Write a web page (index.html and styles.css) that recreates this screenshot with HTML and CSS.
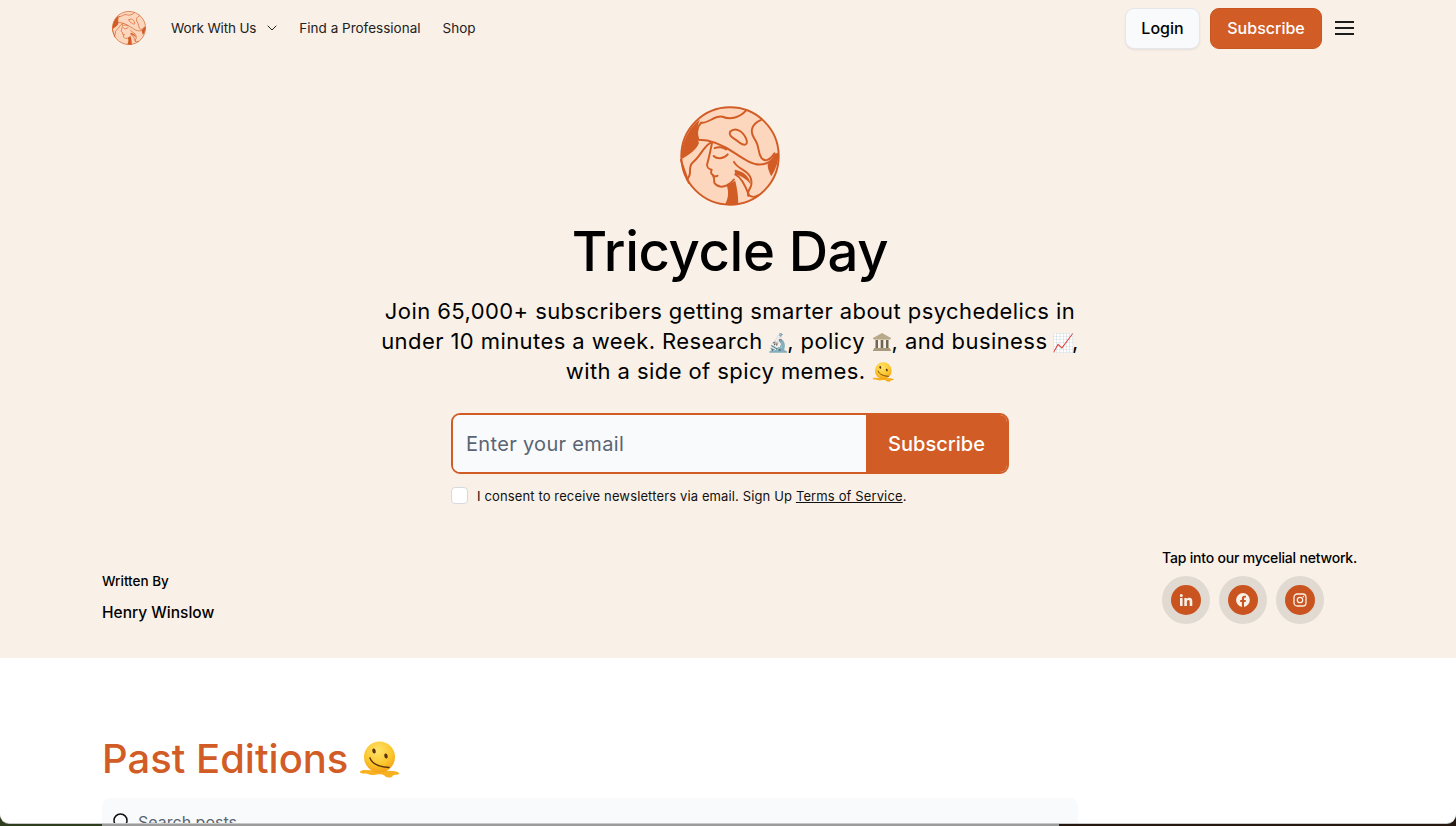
FILE: index.html
```html
<!DOCTYPE html>
<html lang="en">
<head>
<meta charset="utf-8">
<title>Tricycle Day</title>
<link rel="stylesheet" href="styles.css">
</head>
<body>
<svg class="defs" width="0" height="0" aria-hidden="true">
  <defs>
    <radialGradient id="melt" cx=".45" cy=".3" r=".75">
      <stop offset="0" stop-color="#ffe36b"/>
      <stop offset=".6" stop-color="#fcc62d"/>
      <stop offset="1" stop-color="#f39a12"/>
    </radialGradient>
  </defs>
  <symbol id="logo" viewBox="57 27 306 306">
    <circle cx="210" cy="180" r="149" fill="#fdd7bd" stroke="#d25c25" stroke-width="6"/>
    <path d="M118 68 C85 92 62 135 60 190 C75 182 108 162 115 140 C108 118 106 98 118 68Z" fill="#d25c25"/>
    <path d="M350 172 C340 190 326 198 325 208 C326 222 332 232 336 242 C350 222 358 198 359 170Z" fill="#d25c25"/>
    <path d="M200 270 L226 256 C232 280 236 305 235 328 C222 331 206 330 195 327 C205 310 207 290 200 270Z" fill="#d25c25"/>
    <path d="M224 222 C245 226 268 236 274 268 C262 250 240 240 226 236Z" fill="#d25c25"/>
    <g fill="none" stroke="#d25c25" stroke-width="6" stroke-linecap="round" stroke-linejoin="round">
      <path d="M122 78 C142 82 165 54 187 60 C212 70 240 62 258 42"/>
      <path d="M122 78 C108 92 106 115 114 130 C150 130 192 148 226 172 C256 192 280 207 302 206 C322 206 342 194 350 176"/>
      <path d="M304 70 C280 80 268 102 284 126 C302 150 294 170 306 186 C316 198 332 194 346 172"/>
      <path d="M210 106 C224 92 246 100 258 124 C268 146 256 150 240 140 C226 126 204 122 210 106Z"/>
      <path d="M155 140 C150 165 146 185 140 205 C138 214 146 220 154 222 C150 230 152 236 158 238 C154 242 172 244 172 240 M158 238 C162 246 162 256 162 262 C170 276 188 276 200 270 C208 266 216 260 222 252"/>
      <path d="M160 180 C170 190 190 190 203 175"/>
      <path d="M163 156 C175 150 190 154 198 160"/>
      <path d="M150 140 C128 152 122 178 96 200 C78 216 98 234 78 252"/>
      <path d="M60 192 C66 212 76 240 84 262"/>
      <path d="M222 198 C236 224 268 222 274 250 C284 282 258 280 266 302"/>
      <path d="M226 236 C244 244 256 268 268 300 C276 306 288 306 296 300"/>
    </g>
  </symbol>
  <symbol id="melting" viewBox="0 0 40 37">
    <path d="M5 29C3 29 1 30 1 31c0 1.500 3 1.500 5 1.500 3 0 4 1.500 8 1.500s6-1 9-.5c3 .4 3 3 7 3s3-2 5-2.500 5 0 5-1.500c0-1.500-3-2-5-2.500z" fill="#f7b01f"/>
    <circle cx="20.500" cy="16" r="15.500" fill="url(#melt)"/>
    <ellipse cx="15" cy="10" rx="1.700" ry="2.600" fill="#5a3410" transform="rotate(-15 15 10)"/>
    <ellipse cx="27" cy="15" rx="1.700" ry="2.600" fill="#5a3410" transform="rotate(-15 27 15)"/>
    <path d="M11 17C13 23 21 26 30 26.500" fill="none" stroke="#5a3410" stroke-width="1.500" stroke-linecap="round"/>
  </symbol>
  <symbol id="bank" viewBox="0 0 20 20">
    <path d="M10 1 19 6v1H1V6z" fill="#b8a98a"/>
    <path d="M2 16h16v1.500H2zM1 17.500h18V19H1z" fill="#a89a7c"/>
    <path d="M3.500 8h2.500v8H3.500zM8.700 8h2.600v8H8.700zM14 8h2.500v8H14z" fill="#6f6753"/>
    <path d="M2 7h16v1H2z" fill="#cfc3a8"/>
  </symbol>
</svg>
<div class="desk">
  <div class="desk-a"></div>
  <div class="desk-b"></div>
  <div class="desk-c"></div>
</div>
<div class="page">
  <header class="hero">
    <nav class="nav">
      <div class="nav-left">
        <svg class="nav-logo"><use href="#logo"/></svg>
        <div class="nav-links">
          <a class="nav-link nav-link-menu">Work With Us
            <svg class="chev" viewBox="0 0 10 6"><path d="M.7.7 5 5 9.300.7" fill="none" stroke="#222" stroke-width="1"/></svg>
          </a>
          <a class="nav-link">Find a Professional</a>
          <a class="nav-link">Shop</a>
        </div>
      </div>
      <div class="nav-right">
        <a class="btn btn-light">Login</a>
        <a class="btn btn-orange">Subscribe</a>
        <svg class="burger" viewBox="0 0 19 16" preserveAspectRatio="none"><path d="M0 2h19M0 8h19M0 14h19" stroke="#1c1c1c" stroke-width="1.800"/></svg>
      </div>
    </nav>
    <div class="intro">
      <svg class="hero-logo"><use href="#logo"/></svg>
      <h1 class="title">Tricycle Day</h1>
      <p class="lead">Join 65,000+ subscribers getting smarter about psychedelics in<br>under 10 minutes a week. Research <span class="lead-emoji">🔬</span>, policy <svg class="lead-bank"><use href="#bank"/></svg>, and business <span class="lead-emoji">📈</span>,<br>with a side of spicy memes. <svg class="lead-melt"><use href="#melting"/></svg></p>
      <form class="signup">
        <div class="signup-field">Enter your email</div>
        <div class="signup-btn">Subscribe</div>
      </form>
      <label class="consent">
        <span class="check"></span>
        <span>I consent to receive newsletters via email. Sign Up <u>Terms of Service</u>.</span>
      </label>
    </div>
    <div class="meta">
      <div class="author">
        <div class="written">Written By</div>
        <div class="name">Henry Winslow</div>
      </div>
      <div class="social">
        <div class="tap">Tap into our mycelial network.</div>
        <div class="social-row">
          <span class="ring"><span class="dot"><svg viewBox="0 0 16 16"><path d="M2 6h2.600v8H2zM3.300 2a1.500 1.500 0 1 1 0 3 1.500 1.500 0 0 1 0-3zM6.300 6h2.500v1.100C9.300 6.300 10.300 5.800 11.400 5.800c2.200 0 2.900 1.400 2.900 3.500V14h-2.600V9.800c0-1-.3-1.800-1.300-1.800-1.100 0-1.500.8-1.500 1.800V14H6.300z" fill="#f9f0e7"/></svg></span></span>
          <span class="ring"><span class="dot"><svg viewBox="0 0 16 16"><path d="M8 1a7 7 0 0 0-1.100 13.900V10H5.200V8h1.700V6.400c0-1.800 1-2.700 2.600-2.700.8 0 1.500.1 1.500.1v1.700h-.9c-.8 0-1.100.5-1.100 1.100V8h1.900l-.3 2H9v4.900A7 7 0 0 0 8 1z" fill="#f9f0e7"/></svg></span></span>
          <span class="ring"><span class="dot"><svg viewBox="0 0 16 16"><rect x="2" y="2" width="12" height="12" rx="3.300" fill="none" stroke="#f9f0e7" stroke-width="1.300"/><circle cx="8" cy="8" r="2.700" fill="none" stroke="#f9f0e7" stroke-width="1.300"/><circle cx="11.400" cy="4.600" r=".8" fill="#f9f0e7"/></svg></span></span>
        </div>
      </div>
    </div>
  </header>
  <main class="editions">
    <h2 class="editions-title">Past Editions <svg class="title-melt"><use href="#melting"/></svg></h2>
    <div class="search">
      <svg class="search-icon" viewBox="0 0 20 20"><circle cx="8.500" cy="8.500" r="6.500" fill="none" stroke="#111" stroke-width="1.500"/><path d="M13.500 13.500 18 18" stroke="#111" stroke-width="1.500"/></svg>
      <span>Search posts</span>
    </div>
  </main>
</div>
</body>
</html>
```

FILE: styles.css
```css
* { box-sizing: border-box; }
html, body { margin: 0; height: 826px; overflow: hidden; background: #241811; }
body { font-family: "Inter", "Noto Sans", sans-serif; color: #000; position: relative; }
.defs { position: absolute; }
.page { position: relative; height: 823px; overflow: hidden; background: #fff; border-radius: 0 0 9px 9px; box-shadow: 0 1px 0 #c8c8c8; }
.hero { background: #f9f0e7; height: 658px; padding: 0 98px 0 102px; display: flex; flex-direction: column; }
.nav { height: 56px; display: flex; justify-content: space-between; align-items: center; }
.nav-left { display: flex; align-items: center; }
.nav-logo { width: 34px; height: 34px; margin-left: 10px; }
.nav-links { display: flex; gap: 22px; margin-left: 25px; font-size: 13.500px; color: #222; align-items: center; }
.nav-link { display: flex; align-items: center; gap: 11px; }
.nav-link-menu { letter-spacing: -.15px; }
.chev { width: 10px; height: 6px; }
.nav-right { display: flex; align-items: center; gap: 10px; }
.btn { display: flex; align-items: center; justify-content: center; height: 41px; border-radius: 9px; font-size: 16px; font-weight: 500; }
.btn-light { width: 75px; background: #f9fafb; border: 1px solid #e4e7ec; box-shadow: 0 1px 2px rgba(0,0,0,.08); }
.btn-orange { width: 112px; background: #d25c25; color: #fff; border: 1px solid #c95520; }
.burger { width: 19px; height: 16px; margin-left: 3px; margin-right: 4px; }
.intro { display: flex; flex-direction: column; align-items: center; margin-top: 50px; }
.hero-logo { width: 100px; height: 100px; }
.title { margin: 9px 0 0; font-size: 54.500px; line-height: 72px; font-weight: 500; letter-spacing: -.4px; }
.lead { margin: 9px 0 0; width: 760px; text-align: center; font-size: 22px; line-height: 30px; letter-spacing: .42px; }
.lead-emoji { font-size: 18px; line-height: 1; letter-spacing: 0; margin: 0 -2px; }
.lead-bank { width: 20px; height: 20px; vertical-align: -3px; }
.lead-melt { width: 22px; height: 20px; vertical-align: -3px; }
.signup { display: flex; width: 558px; height: 61px; margin-top: 27px; border: 2px solid #d25c25; border-radius: 9px; overflow: hidden; }
.signup-field { flex: 1; background: #f9fafb; color: #5b6472; font-size: 20px; letter-spacing: .32px; padding-left: 13px; display: flex; align-items: center; }
.signup-btn { width: 141px; background: #d25c25; color: #fff; font-size: 20px; font-weight: 500; display: flex; align-items: center; justify-content: center; }
.consent { display: flex; align-items: center; gap: 9px; width: 558px; margin-top: 13px; font-size: 13px; letter-spacing: .13px; color: #111; }
.check { width: 17px; height: 17px; background: #fff; border: 1px solid #d5d9e0; border-radius: 4px; }
.meta { display: flex; justify-content: space-between; margin-top: 44px; }
.author { padding-top: 23px; }
.written { font-size: 13.500px; line-height: 20px; font-weight: 500; }
.name { font-size: 15.500px; line-height: 24px; font-weight: 500; margin-top: 10px; }
.social { width: 196px; }
.tap { font-size: 14px; line-height: 20px; font-weight: 500; white-space: nowrap; letter-spacing: -.2px; }
.social-row { display: flex; gap: 9px; margin-top: 8px; }
.ring { width: 48px; height: 48px; border-radius: 50%; background: #e1dad2; display: flex; align-items: center; justify-content: center; }
.dot { width: 30px; height: 30px; border-radius: 50%; background: #c9541f; display: flex; align-items: center; justify-content: center; }
.dot svg { width: 16px; height: 16px; }
.editions { padding: 75px 0 0 102px; }
.editions-title { margin: 0; font-size: 40px; line-height: 52px; font-weight: 500; color: #d25c25; display: flex; align-items: center; gap: 11px; }
.title-melt { width: 40px; height: 37px; }
.search { width: 976px; height: 60px; margin-top: 13px; background: #f9fafb; border-radius: 8px; display: flex; align-items: flex-start; padding: 14px 0 0 10px; gap: 6px; color: #5b6472; font-size: 16px; line-height: 20px; }
.search-icon { width: 20px; height: 20px; }
.desk { position: absolute; left: 0; right: 0; bottom: 0; height: 12px; display: flex; align-items: flex-end; }
.desk-a { width: 102px; height: 12px; background: #2f3d1f; }
.desk-b { width: 957px; height: 3px; background: #9c9c9c; }
.desk-c { flex: 1; height: 3px; background: #241811; }
```
